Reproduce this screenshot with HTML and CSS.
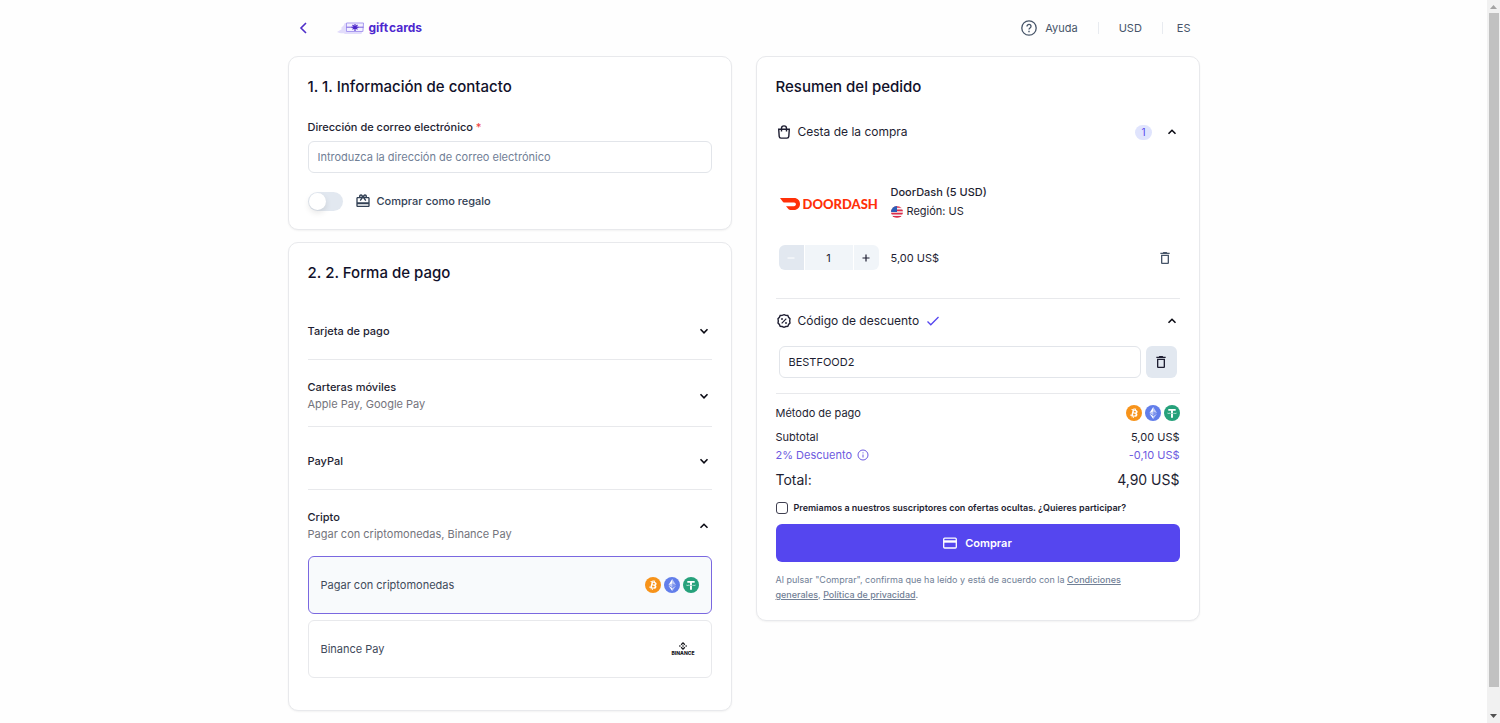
FILE: index.html
```html
<!DOCTYPE html>
<html lang="es">
<head>
  <meta charset="utf-8">
  <meta name="viewport" content="width=device-width, initial-scale=1">
  <title>Gift cards - Finalizar compra</title>
  <link rel="stylesheet" href="styles.css">
</head>
<body>
  <!-- shared icons -->
  <svg class="icon-defs" width="0" height="0" aria-hidden="true">
    <symbol id="chevron-down" viewBox="0 0 12 12">
      <path d="M2.5 4.3 6 7.8l3.500-3.500" fill="none" stroke="currentColor" stroke-width="1.600"/>
    </symbol>
    <symbol id="chevron-up" viewBox="0 0 12 12">
      <path d="M2.500 7.800 6 4.300l3.500 3.500" fill="none" stroke="currentColor" stroke-width="1.600"/>
    </symbol>
    <symbol id="trash" viewBox="0 0 24 24">
      <path d="M6 19c0 1.100.9 2 2 2h8c1.100 0 2-.9 2-2V7H6v12zM8 9h8v10H8V9zm7.500-5-1-1h-5l-1 1H5v2h14V4h-3.500z" fill="currentColor"/>
    </symbol>
    <symbol id="btc" viewBox="0 0 32 32">
      <circle cx="16" cy="16" r="16" fill="#f7931a"/>
      <path d="M23.189 14.020c.314-2.096-1.283-3.223-3.465-3.975l.708-2.840-1.728-.43-.69 2.765c-.454-.114-.92-.22-1.385-.326l.695-2.783L15.596 6l-.708 2.839c-.376-.086-.746-.17-1.104-.26l.002-.009-2.384-.595-.46 1.846s1.283.294 1.256.312c.7.175.826.638.805 1.006l-.806 3.235c.048.012.110.030.180.057l-.183-.045-1.130 4.532c-.086.212-.303.531-.793.410.018.025-1.256-.313-1.256-.313l-.858 1.978 2.250.561c.418.105.828.215 1.231.318l-.715 2.872 1.727.43.708-2.840c.472.127.930.245 1.378.357l-.706 2.828 1.728.43.715-2.866c2.948.558 5.164.333 6.097-2.333.752-2.146-.037-3.385-1.588-4.192 1.130-.260 1.980-1.003 2.207-2.538zm-3.950 5.538c-.533 2.147-4.148.986-5.320.695l.950-3.805c1.172.293 4.929.872 4.370 3.110zm.535-5.569c-.487 1.953-3.495.960-4.470.717l.860-3.450c.975.243 4.118.696 3.610 2.733z" fill="#fff"/>
    </symbol>
    <symbol id="eth" viewBox="0 0 32 32">
      <circle cx="16" cy="16" r="16" fill="#627eea"/>
      <g fill="#fff">
        <path fill-opacity=".6" d="M16.498 4v8.870l7.497 3.350z"/>
        <path d="M16.498 4 9 16.220l7.498-3.350z"/>
        <path fill-opacity=".6" d="M16.498 21.968v6.027L24 17.616z"/>
        <path d="M16.498 27.995v-6.028L9 17.616z"/>
        <path fill-opacity=".2" d="m16.498 20.573 7.497-4.353-7.497-3.348z"/>
        <path fill-opacity=".6" d="m9 16.220 7.498 4.353v-7.701z"/>
      </g>
    </symbol>
    <symbol id="usdt" viewBox="0 0 32 32">
      <circle cx="16" cy="16" r="16" fill="#26a17b"/>
      <path d="M17.922 17.383c-.110.008-.677.042-1.942.042-1.010 0-1.721-.030-1.971-.042-3.888-.171-6.790-.848-6.790-1.658s2.902-1.486 6.790-1.660v2.644c.254.018.982.061 1.988.061 1.207 0 1.812-.050 1.925-.060v-2.643c3.880.173 6.775.850 6.775 1.658 0 .810-2.895 1.485-6.775 1.657m0-3.590v-2.366h5.414V7.819H8.595v3.608h5.414v2.365c-4.400.202-7.709 1.074-7.709 2.118 0 1.044 3.309 1.915 7.709 2.118v7.582h3.913v-7.584c4.393-.202 7.694-1.073 7.694-2.116 0-1.043-3.301-1.914-7.694-2.117" fill="#fff"/>
    </symbol>
  </svg>

  <div class="page">
    <header class="header">
      <a href="#" class="back" aria-label="Volver">
        <svg width="12" height="14" viewBox="0 0 12 14"><path d="M8 2 3 7l5 5" fill="none" stroke="#4f2fc9" stroke-width="1.600"/></svg>
      </a>
      <a href="#" class="logo" aria-label="gift cards">
        <svg width="28" height="14" viewBox="0 0 28 14">
          <path d="M7 4 4 7l1 1-5 3c3 2 8 1 11 1z" fill="#e2dcfb"/>
          <rect x="7" y="2" width="18" height="11" rx="1.500" fill="#e2dcfb"/>
          <path d="M9.500 2h17l-.6 8.500H9.500z" fill="#f3f0ff" stroke="#a99bf0" stroke-width="1"/>
          <path d="M9.500 6.200h17" stroke="#7a60e0" stroke-width="1"/>
          <path d="M18 3v7M15.500 4l5 4.400M20.500 4l-5 4.400M14.500 6.200h7" stroke="#4a25c9" stroke-width="1.100"/>
        </svg>
        <span class="logo-text"><span>gift</span><span>cards</span></span>
      </a>
      <nav class="header-nav">
        <a href="#" class="nav-item help">
          <svg width="16" height="16" viewBox="0 0 16 16" fill="none" stroke="currentColor">
            <circle cx="8" cy="8" r="7.200" stroke-width="1.300"/>
            <path d="M6 6.400c0-2.700 4-2.600 4 0C10 7.900 8 7.900 8 9.500" stroke-width="1.300"/>
            <path d="M8 10.800v1.400" stroke-width="1.400"/>
          </svg>
          Ayuda
        </a>
        <button type="button" class="nav-item currency">USD</button>
        <button type="button" class="nav-item language">ES</button>
      </nav>
    </header>

    <main class="columns">
      <div class="column">
        <section class="card contact">
          <h2>1. 1. Información de contacto</h2>
          <label for="email" class="field-label">Dirección de correo electrónico <span class="required">*</span></label>
          <input type="email" id="email" class="text-input" placeholder="Introduzca la dirección de correo electrónico">
          <label class="gift-row">
            <input type="checkbox" class="switch">
            <svg width="16" height="16" viewBox="0 0 24 24" fill="currentColor">
              <path d="M20 6h-2.180c.110-.310.180-.650.180-1 0-1.660-1.340-3-3-3-1.050 0-1.960.540-2.500 1.350l-.500.670-.500-.680C10.960 2.540 10.050 2 9 2 7.340 2 6 3.340 6 5c0 .350.070.690.180 1H4c-1.110 0-1.990.890-1.990 2L2 19c0 1.110.890 2 2 2h16c1.110 0 2-.890 2-2V8c0-1.110-.890-2-2-2zm-5-2c.550 0 1 .450 1 1s-.450 1-1 1-1-.450-1-1 .450-1 1-1zM9 4c.550 0 1 .450 1 1s-.450 1-1 1-1-.450-1-1 .450-1 1-1zm11 15H4v-2h16v2zm0-5H4V8h5.080L7 10.830 8.620 12 12 7.400l3.380 4.600L17 10.830 14.920 8H20v6z"/>
            </svg>
            <span>Comprar como regalo</span>
          </label>
        </section>

        <section class="card payment">
          <h2>2. 2. Forma de pago</h2>
          <button type="button" class="method">
            <span class="method-name">Tarjeta de pago</span>
            <svg class="chevron"><use href="#chevron-down"/></svg>
          </button>
          <button type="button" class="method tall">
            <span class="method-name">Carteras móviles<small>Apple Pay, Google Pay</small></span>
            <svg class="chevron"><use href="#chevron-down"/></svg>
          </button>
          <button type="button" class="method">
            <span class="method-name">PayPal</span>
            <svg class="chevron"><use href="#chevron-down"/></svg>
          </button>
          <button type="button" class="method tall open" aria-expanded="true">
            <span class="method-name">Cripto<small>Pagar con criptomonedas, Binance Pay</small></span>
            <svg class="chevron"><use href="#chevron-up"/></svg>
          </button>
          <div class="options">
            <label class="option">
              <input type="radio" name="crypto" checked>
              <span>Pagar con criptomonedas</span>
              <span class="coins">
                <svg><use href="#btc"/></svg>
                <svg><use href="#eth"/></svg>
                <svg><use href="#usdt"/></svg>
              </span>
            </label>
            <label class="option">
              <input type="radio" name="crypto">
              <span>Binance Pay</span>
              <span class="binance">
                <svg width="8" height="8" viewBox="0 0 8 8" fill="#14151a">
                  <path d="M4 0 6.300 2.300l-.9.9L4 1.800 2.600 3.200l-.9-.9zM4 8 1.700 5.700l.9-.9L4 6.200l1.400-1.400.9.9zM.9 3.100l.9.900-.9.900L0 4zM7.100 3.100 8 4l-.9.900-.9-.900zM4 3.100l.9.900-.9.900-.9-.900z"/>
                </svg>
                BINANCE
              </span>
            </label>
          </div>
        </section>
      </div>

      <div class="column">
        <section class="card summary">
          <h2>Resumen del pedido</h2>

          <button type="button" class="section-toggle" aria-expanded="true">
            <svg width="16" height="16" viewBox="0 0 16 16" fill="none" stroke="currentColor" stroke-width="1.400">
              <path d="M2.700 5.200h10.600l-.5 7.200c-.1 1.100-.8 1.700-1.800 1.700H5c-1 0-1.700-.6-1.800-1.700zM5.500 7.500V4.300c0-3.300 5-3.300 5 0v3.200"/>
            </svg>
            Cesta de la compra
            <span class="badge">1</span>
            <svg class="chevron"><use href="#chevron-up"/></svg>
          </button>

          <div class="product">
            <div class="brand">
              <svg width="20" height="12" viewBox="0 0 20 12">
                <path d="M0 0h14c3.600 0 6 2.500 6 6s-2.700 6-6 6h-3.600c-.8 0-1.300-.3-1.800-.8L6 8.200h8c2.600 0 2.600-3.600 0-3.600H4.700c-.7 0-1.200-.2-1.700-.7z" fill="#ff3008"/>
              </svg>
              <span>DOORDASH</span>
            </div>
            <div class="product-info">
              <strong>DoorDash (5 USD)</strong>
              <span class="region">
                <svg width="12" height="12" viewBox="0 0 12 12">
                  <clipPath id="flag"><circle cx="6" cy="6" r="6"/></clipPath>
                  <g clip-path="url(#flag)">
                    <path d="M0 0h12v12H0z" fill="#f5f0f2"/>
                    <path d="M0 1h12M0 4.300h12M0 7.600h12M0 10.900h12" stroke="#dc2c4b" stroke-width="1.700"/>
                    <path d="M0 0h6v6H0z" fill="#2a5db8"/>
                  </g>
                </svg>
                Región: US
              </span>
            </div>
          </div>

          <div class="quantity-row">
            <div class="quantity">
              <button type="button" disabled aria-label="Menos">
                <svg width="10" height="10" viewBox="0 0 10 10"><path d="M1.500 5h7" stroke="currentColor"/></svg>
              </button>
              <input type="text" value="1" aria-label="Cantidad">
              <button type="button" aria-label="Más">
                <svg width="10" height="10" viewBox="0 0 10 10"><path d="M1.500 5h7M5 1.500v7" stroke="currentColor" stroke-width="1.200"/></svg>
              </button>
            </div>
            <span>5,00 US$</span>
            <button type="button" class="remove" aria-label="Eliminar">
              <svg width="16" height="16"><use href="#trash"/></svg>
            </button>
          </div>

          <div class="discount">
            <button type="button" class="section-toggle" aria-expanded="true">
              <svg width="16" height="16" viewBox="0 0 16 16" fill="none" stroke="currentColor">
                <path d="m8 1.700 1.800.7 2 .1.800 1.800 1.400 1.500-.3 2.200.3 2-1.400 1.500-.8 1.900-2 .1-1.800.8-1.800-.8-2-.1-.8-1.900L2 10l.3-2L2 5.800l1.400-1.500.8-1.800 2-.1z" stroke-width="1.400"/>
                <path d="m5.700 10.300 4.600-4.600" stroke-width="1.200"/>
                <circle cx="6" cy="6" r=".7" fill="currentColor" stroke-width=".6"/>
                <circle cx="10" cy="10" r=".7" fill="currentColor" stroke-width=".6"/>
              </svg>
              Código de descuento
              <svg class="check" width="14" height="12" viewBox="0 0 14 12"><path d="m1.500 6.500 3.300 3.300L12.500 2" fill="none" stroke="#5546ef" stroke-width="1.300"/></svg>
              <svg class="chevron"><use href="#chevron-up"/></svg>
            </button>
            <div class="coupon">
              <input type="text" class="text-input" value="BESTFOOD2" aria-label="Código de descuento">
              <button type="button" aria-label="Quitar código">
                <svg width="16" height="16"><use href="#trash"/></svg>
              </button>
            </div>
          </div>

          <dl class="totals">
            <div class="line pay">
              <dt>Método de pago</dt>
              <dd class="coins">
                <svg><use href="#btc"/></svg>
                <svg><use href="#eth"/></svg>
                <svg><use href="#usdt"/></svg>
              </dd>
            </div>
            <div class="line"><dt>Subtotal</dt><dd>5,00 US$</dd></div>
            <div class="line saving">
              <dt>
                2% Descuento
                <svg width="12" height="12" viewBox="0 0 12 12" fill="none" stroke="currentColor"><circle cx="6" cy="6" r="5"/><path d="M6 5.500v3M6 3.300v1.100"/></svg>
              </dt>
              <dd>-0,10 US$</dd>
            </div>
            <div class="line total"><dt>Total:</dt><dd>4,90 US$</dd></div>
          </dl>

          <label class="subscribe">
            <input type="checkbox">
            Premiamos a nuestros suscriptores con ofertas ocultas. ¿Quieres participar?
          </label>

          <button type="submit" class="buy">
            <svg width="14" height="12" viewBox="0 0 14 12"><rect x=".7" y="1.200" width="12.600" height="9.800" rx="1" fill="none" stroke="#fff" stroke-width="1.300"/><path d="M1 3.300h12v2.400H1z" fill="#fff"/></svg>
            Comprar
          </button>

          <p class="legal">Al pulsar "Comprar", confirma que ha leído y está de acuerdo con la <a href="#">Condiciones<br>generales</a>, <a href="#">Política de privacidad</a>.</p>
        </section>
      </div>
    </main>
  </div>

  <div class="scrollbar" aria-hidden="true">
    <svg width="7" height="4" viewBox="0 0 7 4"><path d="M0 4 3.500 0 7 4z" fill="#a3a3a3"/></svg>
    <div class="thumb"></div>
    <svg width="7" height="4" viewBox="0 0 7 4"><path d="M0 0h7L3.500 4z" fill="#505050"/></svg>
  </div>
</body>
</html>
```
FILE: styles.css
```css
* {
  box-sizing: border-box;
}

body {
  display: flex;
  margin: 0;
  background: #fefefe;
  color: #1e1e32;
  font-family: Inter, "Liberation Sans", sans-serif;
  font-size: 11px;
  line-height: 18px;
}

button,
input {
  font: inherit;
  color: inherit;
}

button {
  padding: 0;
  border: none;
  background: none;
  cursor: pointer;
}

svg {
  flex: none;
}

.icon-defs {
  position: absolute;
}

.page {
  flex: 1;
  min-width: 0;
  padding: 0 20px;
}

/* header */
.header {
  display: flex;
  align-items: center;
  max-width: 912px;
  height: 56px;
  margin: 0 auto;
  padding: 0 9px 0 10px;
}

.back,
.logo,
.help {
  display: flex;
  align-items: center;
  text-decoration: none;
}

.logo {
  gap: 4px;
  margin-left: 27px;
  color: #4d27cf;
}

.logo-text {
  display: flex;
  gap: 1px;
  font-size: 12px;
  font-weight: 700;
}

.header-nav {
  display: flex;
  align-items: center;
  margin-left: auto;
  color: #475569;
}

.nav-item {
  color: inherit;
  line-height: 12px;
}

.help {
  gap: 8px;
}

.currency,
.language {
  margin-left: 20px;
  padding-left: 20px;
  border-left: 1px solid #e8ebf0;
}

.language {
  padding-left: 14px;
}

/* layout */
.columns {
  display: flex;
  align-items: flex-start;
  gap: 24px;
  max-width: 912px;
  margin: 0 auto;
}

.column {
  display: flex;
  flex: 1;
  flex-direction: column;
  gap: 12px;
  min-width: 0;
}

.card {
  padding: 18px;
  border: 1px solid #e8e9ec;
  border-radius: 10px;
  background: #fff;
  box-shadow: 0 1px 2px rgba(0, 0, 0, 0.05);
  padding: 18px 19px;
}

h2 {
  margin: 0;
  color: #11112a;
  font-size: 15px;
  font-weight: 500;
  line-height: 24px;
}

.chevron {
  width: 12px;
  height: 12px;
  color: #0b0b14;
}

.text-input {
  width: 100%;
  height: 32px;
  padding: 0 9px;
  border: 1px solid #e2e5ea;
  border-radius: 6px;
  background: #fff;
}

.text-input::placeholder {
  color: #718096;
  opacity: 1;
}

/* contact */
.field-label {
  display: block;
  margin: 20px 0 6px;
  font-weight: 500;
  line-height: 16px;
}

.required {
  color: #ef4444;
}

.gift-row {
  display: flex;
  align-items: center;
  height: 20px;
  margin-top: 18px;
  color: #334155;
  font-weight: 500;
}

.gift-row span {
  margin-left: 6px;
}

.switch {
  display: flex;
  align-items: center;
  width: 35px;
  height: 19px;
  margin: 0 12px 0 0;
  padding: 1px;
  border-radius: 10px;
  background: #e2e8f0;
  appearance: none;
}

.switch::before {
  content: "";
  width: 17px;
  height: 17px;
  border-radius: 50%;
  background: #fff;
  box-shadow: 0 3px 6px rgba(0, 0, 0, 0.1);
}

.switch:checked {
  justify-content: flex-end;
  background: #5546ef;
}

/* payment methods */
.payment {
  padding-bottom: 32px;
}

.payment h2 {
  margin-bottom: 18px;
}

.method {
  display: flex;
  align-items: center;
  justify-content: space-between;
  width: 100%;
  height: 57px;
  margin-top: 6px;
  padding-right: 2px;
  border-bottom: 1px solid #e8e9ec;
  text-align: left;
}

.method.tall {
  height: 61px;
}

.method.open {
  height: 60px;
  border-bottom: none;
}

.method-name {
  font-weight: 500;
  line-height: 17px;
}

.method-name small {
  display: block;
  color: #74747c;
  font-size: 11px;
  font-weight: 400;
}

.options {
  display: grid;
  gap: 6px;
}

.option {
  display: flex;
  align-items: center;
  justify-content: space-between;
  height: 58px;
  padding: 0 12px;
  border: 1px solid #e8e9ec;
  border-radius: 6px;
  color: #414a5b;
}

.option input {
  width: 0;
  height: 0;
  margin: 0;
  appearance: none;
}

.option input + span {
  flex: 1;
}

.option:has(:checked) {
  border-color: #7a68e0;
  background: #f8fafc;
}

.coins {
  display: flex;
  gap: 3px;
}

.coins svg {
  width: 16px;
  height: 16px;
}

.binance {
  display: flex;
  flex-direction: column;
  align-items: center;
  margin-right: 4px;
  color: #14151a;
  font-size: 5px;
  font-weight: 800;
  line-height: 7px;
}

/* summary */
.section-toggle {
  display: flex;
  align-items: center;
  width: 100%;
  height: 20px;
  padding-right: 2px;
  font-size: 12px;
  line-height: 20px;
}

.section-toggle svg:first-child {
  margin-right: 6px;
}

.section-toggle .chevron {
  margin-left: auto;
}

.section-toggle .check {
  margin-left: 7px;
}

.summary h2 {
  margin-bottom: 23px;
}

.badge {
  margin-left: auto;
  padding: 0 6px;
  border-radius: 8px;
  background: #e0e4fd;
  color: #5546ef;
  font-size: 10px;
  line-height: 15px;
}

.section-toggle .badge + .chevron {
  margin-left: 14px;
}

.product {
  display: flex;
  align-items: center;
  gap: 13px;
  margin-top: 41px;
  padding-left: 4px;
}

.brand {
  display: flex;
  align-items: center;
  gap: 3px;
  width: 98px;
  padding-top: 4px;
  color: #ff3008;
  font-family: Lato, sans-serif;
  font-size: 13px;
  font-weight: 900;
}

.product-info {
  display: grid;
  line-height: 19px;
}

.product-info strong {
  font-weight: 500;
}

.region {
  display: flex;
  align-items: center;
  gap: 4px;
}

.quantity-row {
  display: flex;
  align-items: center;
  gap: 12px;
  margin: 24px 0 28px;
  padding: 0 7px 0 3px;
}

.quantity {
  display: flex;
  gap: 1px;
  width: 100px;
  height: 25px;
  overflow: hidden;
  border-radius: 6px;
}

.quantity button {
  display: grid;
  place-items: center;
  width: 25px;
  background: #f1f5f9;
}

.quantity button:disabled {
  background: #e2e8f0;
  color: #fff;
}

.quantity input {
  flex: 1;
  width: 0;
  padding: 0;
  border: none;
  background: #f1f5f9;
  text-align: center;
}

.remove {
  display: flex;
  margin-left: auto;
  color: #475569;
}

.discount {
  padding: 12px 0 15px;
  border: 1px solid #e8e9ec;
  border-width: 1px 0;
}

.coupon {
  display: flex;
  gap: 5px;
  margin-top: 15px;
  padding: 0 3px;
}

.coupon button {
  display: grid;
  flex: none;
  place-items: center;
  width: 31px;
  border-radius: 6px;
  background: #e2e8f0;
}

.totals {
  margin: 10px 0 0;
}

.line {
  display: flex;
  align-items: center;
  justify-content: space-between;
}

.line dt {
  display: flex;
  align-items: center;
  gap: 5px;
}

.line dd {
  margin: 0;
}

.line dd.coins {
  display: flex;
}

.line.pay {
  margin-bottom: 6px;
}

.saving {
  color: #6d5ae0;
}

.total {
  margin-top: 4px;
  font-size: 14px;
  line-height: 24px;
}

.subscribe {
  display: flex;
  align-items: center;
  gap: 6px;
  margin-top: 8px;
  font-size: 9px;
  font-weight: 600;
  line-height: 16px;
}

.subscribe input {
  width: 12px;
  height: 12px;
  margin: 0;
  border: 1px solid #3f3f50;
  border-radius: 3px;
  appearance: none;
}

.buy {
  display: flex;
  align-items: center;
  justify-content: center;
  gap: 8px;
  width: 100%;
  height: 38px;
  margin-top: 8px;
  border-radius: 6px;
  background: #5546ef;
  color: #fff;
  font-weight: 600;
}

.legal {
  margin: 10px 0 0;
  color: #718096;
  font-size: 9px;
  line-height: 15px;
}

.legal a {
  color: inherit;
  font-weight: 500;
}

/* scrollbar */
.scrollbar {
  position: sticky;
  top: 0;
  display: flex;
  flex: none;
  flex-direction: column;
  align-items: center;
  width: 13px;
  height: 100vh;
  padding: 5px 0;
  background: #f1f1f1;
}

.scrollbar .thumb {
  flex: 1;
  width: 10px;
  margin: 4px 0 27px;
  background: #c1c1c1;
}
```
